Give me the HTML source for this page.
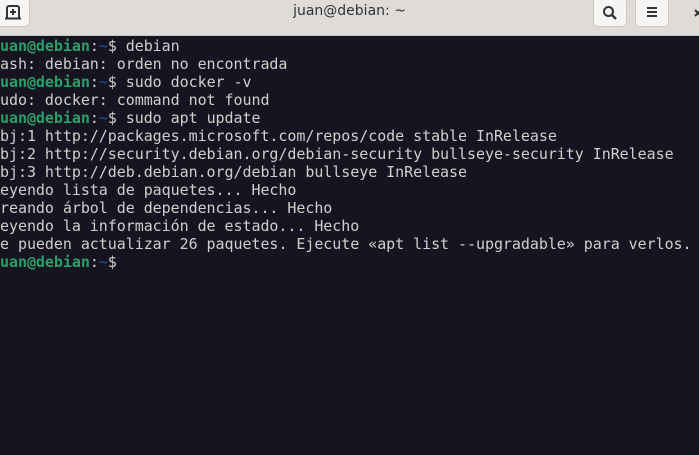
<!DOCTYPE html><html><head><style>
body{margin:0;width:699px;height:455px;overflow:hidden;background:#171421;font-family:"Liberation Sans",sans-serif}
.hd{position:absolute;left:0;top:0;width:699px;height:35px;background:#dfdbd8;border-bottom:1px solid #c8c4c0}
.btn{position:absolute;top:-4px;height:31px;background:#f6f5f4;border:1px solid #cdc9c5;border-radius:5px;box-sizing:border-box}
.title{position:absolute;left:0;width:699px;top:3px;text-align:center;color:#2e3436;font-family:"DejaVu Sans",sans-serif;font-size:14px}
pre{position:absolute;left:0;top:37px;margin:0;font-family:"DejaVu Sans Mono",monospace;font-size:15px;line-height:18px;color:#d0cfcc;letter-spacing:-0.05px}
.g{color:#26a269;font-weight:bold}.b{color:#12488b;font-weight:bold}
</style></head><body>
<div class="hd">
<div class="btn" style="left:-6px;width:36px"></div>
<svg style="position:absolute;left:5px;top:4px" width="16" height="16" viewBox="0 0 16 16"><path d="M2 14V4a2 2 0 0 1 2-2h8a2 2 0 0 1 2 2v10" fill="none" stroke="#2e3436" stroke-width="2"/><path d="M0 14.5h16" stroke="#2e3436" stroke-width="2"/><path d="M8 5v6M5 8h6" stroke="#2e3436" stroke-width="2"/></svg>
<div class="title">juan@debian: ~</div>
<div class="btn" style="left:593px;width:34px"></div>
<svg style="position:absolute;left:602px;top:5px" width="16" height="16" viewBox="0 0 16 16"><circle cx="6.5" cy="6.5" r="4.5" fill="none" stroke="#2e3436" stroke-width="2"/><path d="M10 10l4 4" stroke="#2e3436" stroke-width="2.4"/></svg>
<div class="btn" style="left:635px;width:34px"></div>
<svg style="position:absolute;left:645px;top:5px" width="14" height="14" viewBox="0 0 14 14"><path d="M2 3h10M2 7h10M2 11h10" stroke="#2e3436" stroke-width="2"/></svg>
<svg style="position:absolute;left:693px;top:8px" width="10" height="10" viewBox="0 0 10 10"><path d="M2 2l6 6M8 2l-6 6" stroke="#2e3436" stroke-width="2"/></svg>
</div>
<pre><span class="g">uan@debian</span>:<span class="b">~</span>$ debian
ash: debian: orden no encontrada
<span class="g">uan@debian</span>:<span class="b">~</span>$ sudo docker -v
udo: docker: command not found
<span class="g">uan@debian</span>:<span class="b">~</span>$ sudo apt update
bj:1 http://packages.microsoft.com/repos/code stable InRelease
bj:2 http://security.debian.org/debian-security bullseye-security InRelease
bj:3 http://deb.debian.org/debian bullseye InRelease
eyendo lista de paquetes... Hecho
reando árbol de dependencias... Hecho
eyendo la información de estado... Hecho
e pueden actualizar 26 paquetes. Ejecute «apt list --upgradable» para verlos.
<span class="g">uan@debian</span>:<span class="b">~</span>$ </pre>
</body></html>
